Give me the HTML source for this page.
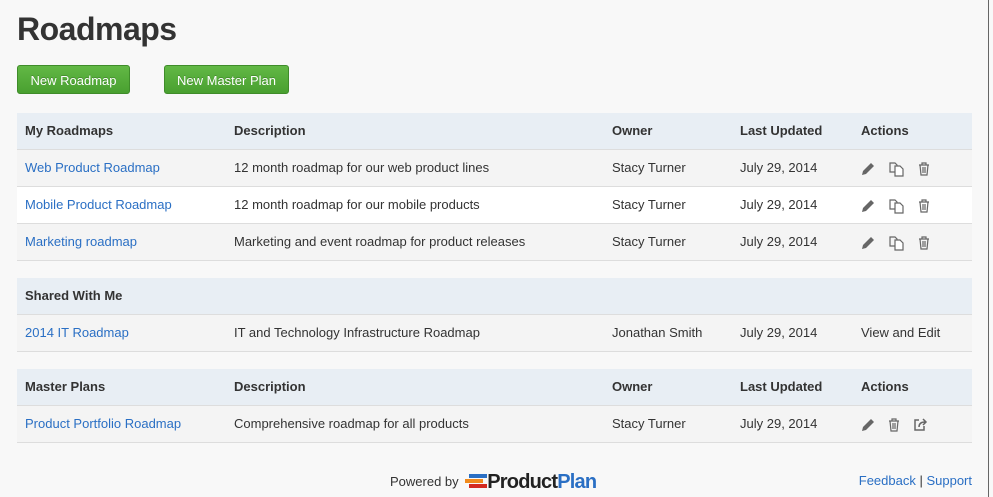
<!DOCTYPE html>
<html><head><style>
body{margin:0;width:993px;height:497px;background:#f8f8f8;font-family:"Liberation Sans",Arial,sans-serif;font-size:13px;color:#333;position:relative;overflow:hidden}
h1{position:absolute;left:17px;top:11px;margin:0;font-size:32px;font-weight:bold;color:#333;letter-spacing:-0.5px}
.btn{position:absolute;top:65px;height:29px;line-height:29px;color:#fff;font-size:13px;text-align:center;border-radius:3px;background:linear-gradient(#62b845,#49a030);border:1px solid #3f8c2a;box-sizing:border-box;text-shadow:0 -1px 0 rgba(0,0,0,.2)}
.tbl{position:absolute;left:17px;width:955px}
.row{position:relative;height:36px;border-bottom:1px solid #ddd;line-height:36px}
.hd{background:#e8eef4;font-weight:bold;color:#333}
.g{background:#f4f4f4}.w{background:#fff}
.c{position:absolute;top:0;white-space:nowrap}
.c1{left:8px}.c2{left:217px}.c3{left:595px}.c4{left:723px}.c5{left:844px}
a{color:#2a6fc4;text-decoration:none}
.ic{display:inline-block;vertical-align:middle;margin-right:13px}
.edge{position:absolute;right:4px;top:0;width:1px;height:497px;background:#666}
</style></head><body>
<h1>Roadmaps</h1>
<div class="btn" style="left:17px;width:113px">New Roadmap</div>
<div class="btn" style="left:164px;width:125px">New Master Plan</div>

<div class="tbl" style="top:113px">
<div class="row hd"><span class="c c1">My Roadmaps</span><span class="c c2">Description</span><span class="c c3">Owner</span><span class="c c4">Last Updated</span><span class="c c5">Actions</span></div>
<div class="row g"><span class="c c1"><a>Web Product Roadmap</a></span><span class="c c2">12 month roadmap for our web product lines</span><span class="c c3">Stacy Turner</span><span class="c c4">July 29, 2014</span><span class="c c5"></span></div>
<div class="row w"><span class="c c1"><a>Mobile Product Roadmap</a></span><span class="c c2">12 month roadmap for our mobile products</span><span class="c c3">Stacy Turner</span><span class="c c4">July 29, 2014</span><span class="c c5"></span></div>
<div class="row g"><span class="c c1"><a>Marketing roadmap</a></span><span class="c c2">Marketing and event roadmap for product releases</span><span class="c c3">Stacy Turner</span><span class="c c4">July 29, 2014</span><span class="c c5"></span></div>
</div>

<div class="tbl" style="top:278px">
<div class="row hd"><span class="c c1">Shared With Me</span></div>
<div class="row g"><span class="c c1"><a>2014 IT Roadmap</a></span><span class="c c2">IT and Technology Infrastructure Roadmap</span><span class="c c3">Jonathan Smith</span><span class="c c4">July 29, 2014</span><span class="c c5">View and Edit</span></div>
</div>

<div class="tbl" style="top:369px">
<div class="row hd"><span class="c c1">Master Plans</span><span class="c c2">Description</span><span class="c c3">Owner</span><span class="c c4">Last Updated</span><span class="c c5">Actions</span></div>
<div class="row g"><span class="c c1"><a>Product Portfolio Roadmap</a></span><span class="c c2">Comprehensive roadmap for all products</span><span class="c c3">Stacy Turner</span><span class="c c4">July 29, 2014</span><span class="c c5 m"></span></div>
</div>

<div style="position:absolute;left:390px;top:472px;font-size:13px;line-height:20px">Powered by
<svg width="22" height="16" style="vertical-align:-3px;margin-left:3px" viewBox="0 0 22 16"><rect x="4" y="1" width="18" height="4" fill="#2a6fc4"/><rect x="0" y="6" width="18" height="4" fill="#f08a1c"/><rect x="4" y="11" width="18" height="4" fill="#d42a20"/></svg><span style="font-size:20px;font-weight:bold;color:#222;letter-spacing:-0.8px;vertical-align:-2px">Product<span style="color:#2a6fc4">Plan</span></span></div>
<div style="position:absolute;right:21px;top:473px;font-size:13px"><a>Feedback</a> | <a>Support</a></div>
<div class="edge"></div>

<script>
var pencil='<svg class="ic" width="14" height="14" viewBox="0 0 14 14"><path d="M10 1l3 3-8 8-4 1 1-4z" fill="#666"/></svg>';
var copy='<svg class="ic" width="17" height="16" viewBox="0 0 17 16" fill="none" stroke="#666" stroke-width="1.2"><path d="M2 2h5l2 2v7H2z"/><path d="M7 5h5l3 3v7H7z" fill="#fff"/></svg>';
var trash='<svg class="ic" width="12" height="14" viewBox="0 0 12 14" fill="none" stroke="#666" stroke-width="1.2"><path d="M1 3h10M4 3V1h4v2M2 3l1 10h6l1-10M5 5v6M7 5v6"/></svg>';
var share='<svg class="ic" width="15" height="14" viewBox="0 0 15 14" fill="none" stroke="#666" stroke-width="1.5"><path d="M6 2H2v10h9V8"/><path d="M6 9c0-4 3-5 6-5M10 1l3 3-3 3" /></svg>';
document.querySelectorAll('.c5').forEach(function(e){if(e.textContent===''&&!e.parentNode.classList.contains('hd')){e.innerHTML=e.classList.contains('m')?pencil+trash+share:pencil+copy+trash;}});
</script>
</body></html>
